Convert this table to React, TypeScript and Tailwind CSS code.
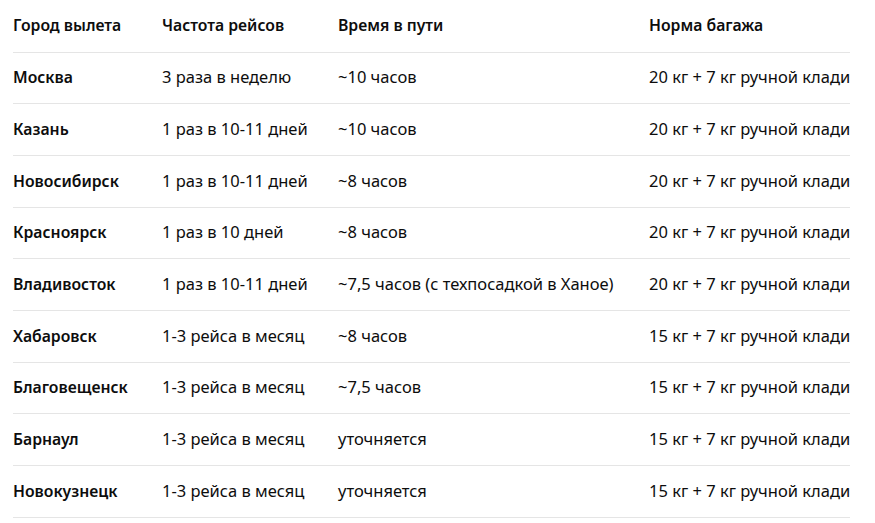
import React from 'react';

const rows = [
  ['Москва', '3 раза в неделю', '~10 часов', '20 кг + 7 кг ручной клади'],
  ['Казань', '1 раз в 10-11 дней', '~10 часов', '20 кг + 7 кг ручной клади'],
  ['Новосибирск', '1 раз в 10-11 дней', '~8 часов', '20 кг + 7 кг ручной клади'],
  ['Красноярск', '1 раз в 10 дней', '~8 часов', '20 кг + 7 кг ручной клади'],
  ['Владивосток', '1 раз в 10-11 дней', '~7,5 часов (с техпосадкой в Ханое)', '20 кг + 7 кг ручной клади'],
  ['Хабаровск', '1-3 рейса в месяц', '~8 часов', '15 кг + 7 кг ручной клади'],
  ['Благовещенск', '1-3 рейса в месяц', '~7,5 часов', '15 кг + 7 кг ручной клади'],
  ['Барнаул', '1-3 рейса в месяц', 'уточняется', '15 кг + 7 кг ручной клади'],
  ['Новокузнецк', '1-3 рейса в месяц', 'уточняется', '15 кг + 7 кг ручной клади'],
];

const headers = ['Город вылета', 'Частота рейсов', 'Время в пути', 'Норма багажа'];

export default function App() {
  return (
    <div className="bg-white w-[875px] h-[523px] overflow-hidden pl-[13px] text-[#0d0d0d] text-[16.5px] leading-6" style={{ fontFamily: '"Noto Sans", "Open Sans", sans-serif' }}>
      <table className="border-collapse table-fixed w-[837px]">
        <colgroup>
          <col className="w-[149px]" />
          <col className="w-[176px]" />
          <col className="w-[311px]" />
          <col className="w-[201px]" />
        </colgroup>
        <thead>
          <tr className="h-[52px] border-b border-[#e5e5e5]">
            {headers.map((h) => (
              <th key={h} className="text-left font-semibold text-[15.75px] p-0 pb-[1px] align-middle whitespace-nowrap">{h}</th>
            ))}
          </tr>
        </thead>
        <tbody>
          {rows.map((r) => (
            <tr key={r[0]} className="h-[51.7px] border-b border-[#e5e5e5]">
              {r.map((c, i) => (
                <td key={i} className={`p-0 pb-[1px] align-middle whitespace-nowrap ${i === 0 ? 'font-semibold text-[15.75px]' : ''}`}>{c}</td>
              ))}
            </tr>
          ))}
        </tbody>
      </table>
    </div>
  );
}
